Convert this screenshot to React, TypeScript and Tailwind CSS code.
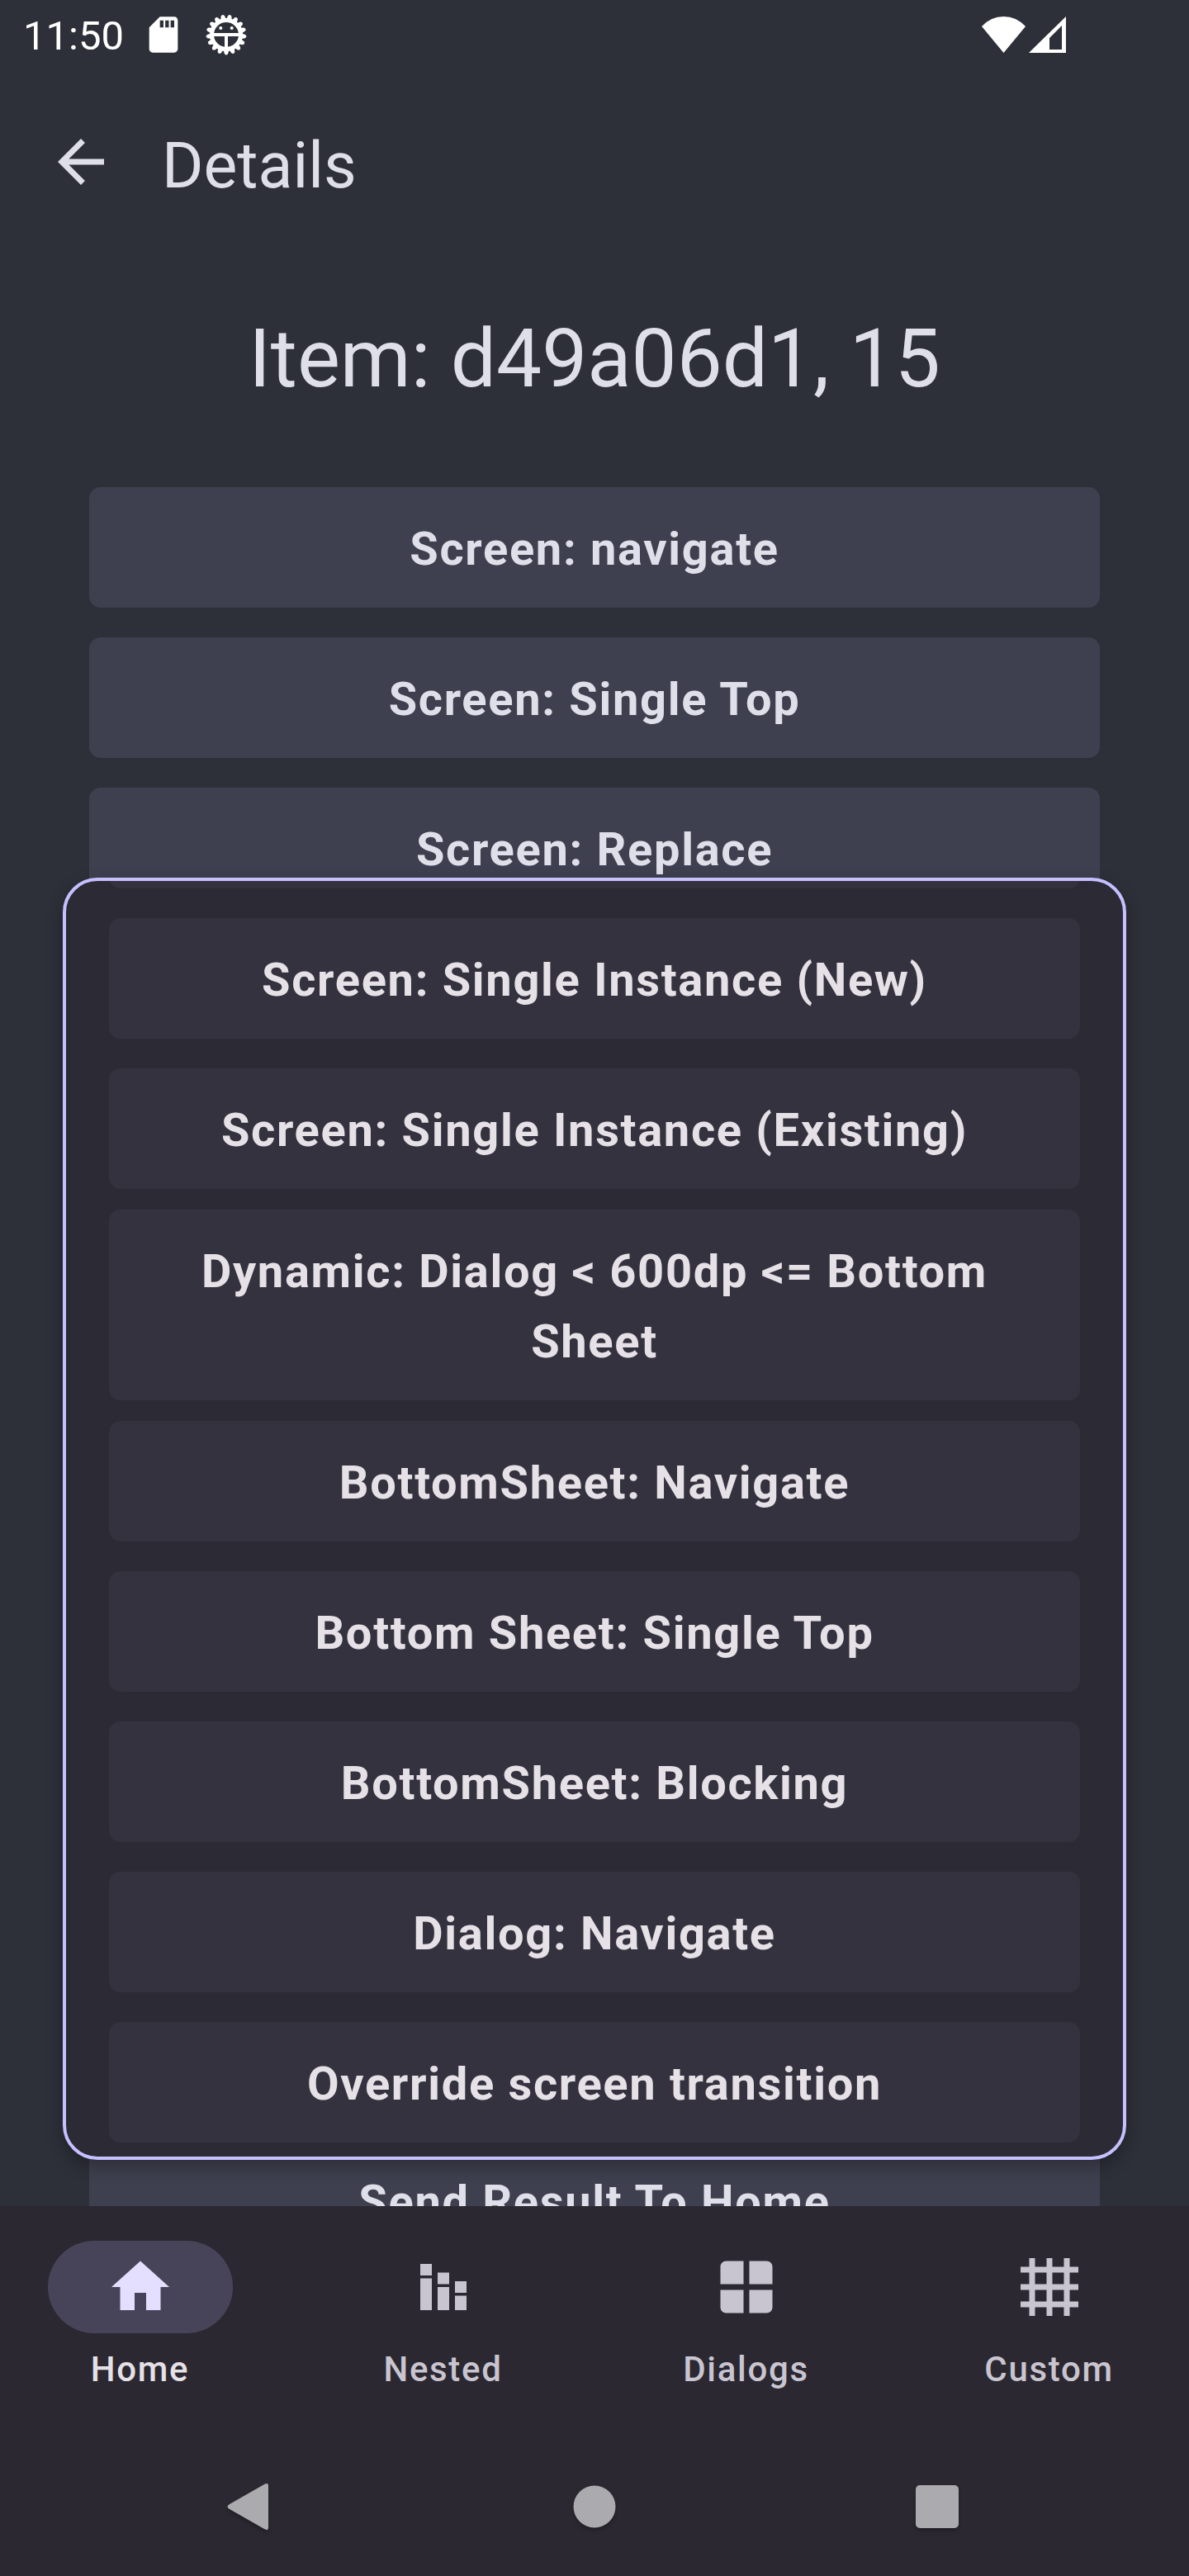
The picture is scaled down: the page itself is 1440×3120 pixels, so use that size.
const dialogActions = [
  "Screen: Single Instance (New)",
  "Screen: Single Instance (Existing)",
  "Dynamic: Dialog < 600dp <= Bottom Sheet",
  "BottomSheet: Navigate",
  "Bottom Sheet: Single Top",
  "BottomSheet: Blocking",
  "Dialog: Navigate",
  "Override screen transition",
];

const screenActions = ["Screen: navigate", "Screen: Single Top", "Screen: Replace"];

const teeth = Array.from({ length: 17 }, (_, i) => (i * 360) / 17);

function StatusBar() {
  return (
    <div className="flex h-[84px] items-center pl-[28px] pr-[149px] text-white">
      <span className="pt-1 text-[49px] leading-[56px]">11:50</span>
      <svg viewBox="0 0 24 24" className="ml-[22px] size-[52px]" fill="currentColor" aria-hidden="true">
        <path d="M18 2h-8L4.020 8 4 20c0 1.100.9 2 2 2h12c1.100 0 2-.9 2-2V4c0-1.100-.9-2-2-2zm-6 6h-2V4h2v4zm3 0h-2V4h2v4zm3 0h-2V4h2v4z" />
      </svg>
      <svg viewBox="-25 -25 50 50" className="ml-[25px] size-[50px]" aria-hidden="true">
        <circle r="17.500" fill="none" stroke="currentColor" strokeWidth="5" />
        {teeth.map((a) => (
          <path key={a} d="M-3.500 18L-2.200 23Q0 26 2.200 23L3.500 18z" fill="currentColor" transform={`rotate(${a})`} />
        ))}
        <path d="M-17 0H17M0 0V17" stroke="currentColor" strokeWidth="4" fill="none" />
        <circle cx="-6.700" cy="-8" r="2" fill="currentColor" />
        <circle cx="6.700" cy="-8" r="2" fill="currentColor" />
      </svg>
      <svg viewBox="0 0 53 44" className="ml-auto h-[44px] w-[53px]" fill="currentColor" aria-hidden="true">
        <path d="M26.500 44L0 12Q11 0 26.500 0T53 12z" />
      </svg>
      <svg viewBox="0 0 45 44" className="ml-1 h-[44px] w-[45px]" aria-hidden="true">
        <path d="M45 0V44H0zM40 11L25 26V40H40z" fill="currentColor" fillRule="evenodd" />
      </svg>
    </div>
  );
}

function ScreenButton({ label }: { label: string }) {
  return (
    <button className="w-full shrink-0 rounded-[14px] bg-[#3f404f] px-[84px] pt-[33px] pb-[28px] text-[56px] leading-[85px] font-bold tracking-[0.03em] text-[#dfdfea]">
      {label}
    </button>
  );
}

function DialogButton({ label }: { label: string }) {
  return (
    <div className="flex min-h-[168px] items-center">
      <button className="w-full rounded-[14px] bg-[#35323f] px-[84px] pt-[33px] pb-[28px] text-[56px] leading-[85px] font-bold tracking-[0.03em] text-[#e5e1e6]">
        {label}
      </button>
    </div>
  );
}

function HomeIcon() {
  return (
    <svg viewBox="0 0 24 24" className="size-[84px]" fill="currentColor" aria-hidden="true">
      <path d="M10 20v-6h4v6h5v-8h3L12 3 2 12h3v8z" />
    </svg>
  );
}

function NestedIcon() {
  return (
    <svg viewBox="0 0 24 24" className="size-[84px]" fill="currentColor" aria-hidden="true">
      <path d="M4 9h4v11H4zM4 4h4v4H4zM10 7h4v4h-4zM16 10h4v4h-4zM16 15h4v5h-4zM10 12h4v8h-4z" />
    </svg>
  );
}

function DialogsIcon() {
  return (
    <svg viewBox="0 0 24 24" className="size-[84px]" fill="currentColor" aria-hidden="true">
      <path d="M11 3v8H3V5c0-1.100.9-2 2-2zM13 3h6c1.100 0 2 .9 2 2v6h-8zM3 13h8v8H5c-1.100 0-2-.9-2-2zM13 13h8v6c0 1.100-.9 2-2 2h-6z" />
    </svg>
  );
}

function CustomIcon() {
  return (
    <svg viewBox="0 0 24 24" className="size-[84px]" fill="none" stroke="currentColor" strokeWidth="2" aria-hidden="true">
      <path d="M6 2v20M12 2v20M18 2v20M2 6h20M2 12h20M2 18h20" />
    </svg>
  );
}

const tabs = [
  { label: "Home", Icon: HomeIcon },
  { label: "Nested", Icon: NestedIcon },
  { label: "Dialogs", Icon: DialogsIcon },
  { label: "Custom", Icon: CustomIcon },
];

export default function App() {
  return (
    <div className="flex min-h-screen flex-col bg-[#2d3038] font-[Roboto,sans-serif]">
      <main className="relative flex flex-1 flex-col overflow-hidden">
        <StatusBar />
        <header className="flex h-[224px] items-start gap-[56px] px-[56px] pt-[70px]">
          <button aria-label="Back" className="text-[#dfdfea]">
            <svg viewBox="0 0 24 24" className="size-[84px]" fill="currentColor" aria-hidden="true">
              <path d="M20 11H7.830l5.590-5.590L12 4l-8 8 8 8 1.410-1.410L7.830 13H20v-2z" />
            </svg>
          </button>
          <span className="text-[77px] leading-[94px] text-[#dfdfea]">Details</span>
        </header>
        <h1 className="pt-[64px] text-center text-[98px] leading-[126px] text-[#dfdfea]">Item: d49a06d1, 15</h1>
        <div className="mt-[92px] flex flex-col gap-9 px-[108px]">
          {screenActions.map((label) => (
            <ScreenButton key={label} label={label} />
          ))}
        </div>
        <div className="mt-auto flex h-[80px] flex-col overflow-hidden px-[108px]">
          <ScreenButton label="Send Result To Home" />
        </div>
        <div
          role="dialog"
          aria-label="Actions"
          className="absolute inset-x-[76px] bottom-[56px] overflow-hidden rounded-[42px] border-4 border-[#c5c0ff] bg-[#2c2a34] px-[52px] pb-[6px] shadow-[0_8px_20px_rgba(0,0,0,0.3)]"
        >
          <div className="flex h-[9px] flex-col justify-end overflow-hidden">
            <div className="h-[146px] shrink-0 rounded-[14px] bg-[#35323f]" />
          </div>
          <div className="mt-[25px] flex flex-col gap-[14px]">
            {dialogActions.map((label) => (
              <DialogButton key={label} label={label} />
            ))}
          </div>
        </div>
      </main>
      <footer className="bg-[#2b2831]">
        <nav className="grid h-[280px] grid-cols-4 gap-7 pt-[42px]">
          {tabs.map(({ label, Icon }, i) => (
            <button key={label} aria-current={i === 0 ? "page" : undefined} className="group flex flex-col items-center gap-4 text-[#c9c5d0]">
              <span className="flex h-[112px] w-[224px] items-center justify-center rounded-full group-aria-[current=page]:bg-[#474459] group-aria-[current=page]:text-[#e4dfff]">
                <Icon />
              </span>
              <span className="text-[42px] leading-[56px] font-medium tracking-[0.04em] group-aria-[current=page]:text-[#e5e1e6]">{label}</span>
            </button>
          ))}
        </nav>
        <div className="flex h-[168px] items-center justify-between px-[255px] text-[#abaaae]">
          <button aria-label="System back">
            <svg viewBox="0 0 100 100" className="size-[100px] drop-shadow-[0_3px_2px_rgba(0,0,0,0.25)]" fill="currentColor" aria-hidden="true">
              <path d="M23 47L65 23Q70 20 70 25V75Q70 80 65 77L23 53Q18 50 23 47z" />
            </svg>
          </button>
          <button aria-label="System home">
            <svg viewBox="0 0 100 100" className="size-[100px] drop-shadow-[0_3px_2px_rgba(0,0,0,0.25)]" fill="currentColor" aria-hidden="true">
              <circle cx="50" cy="50" r="25.500" />
            </svg>
          </button>
          <button aria-label="Recent apps">
            <svg viewBox="0 0 100 100" className="size-[100px] drop-shadow-[0_3px_2px_rgba(0,0,0,0.25)]" fill="currentColor" aria-hidden="true">
              <rect x="24" y="24" width="52" height="52" rx="5" />
            </svg>
          </button>
        </div>
      </footer>
    </div>
  );
}
